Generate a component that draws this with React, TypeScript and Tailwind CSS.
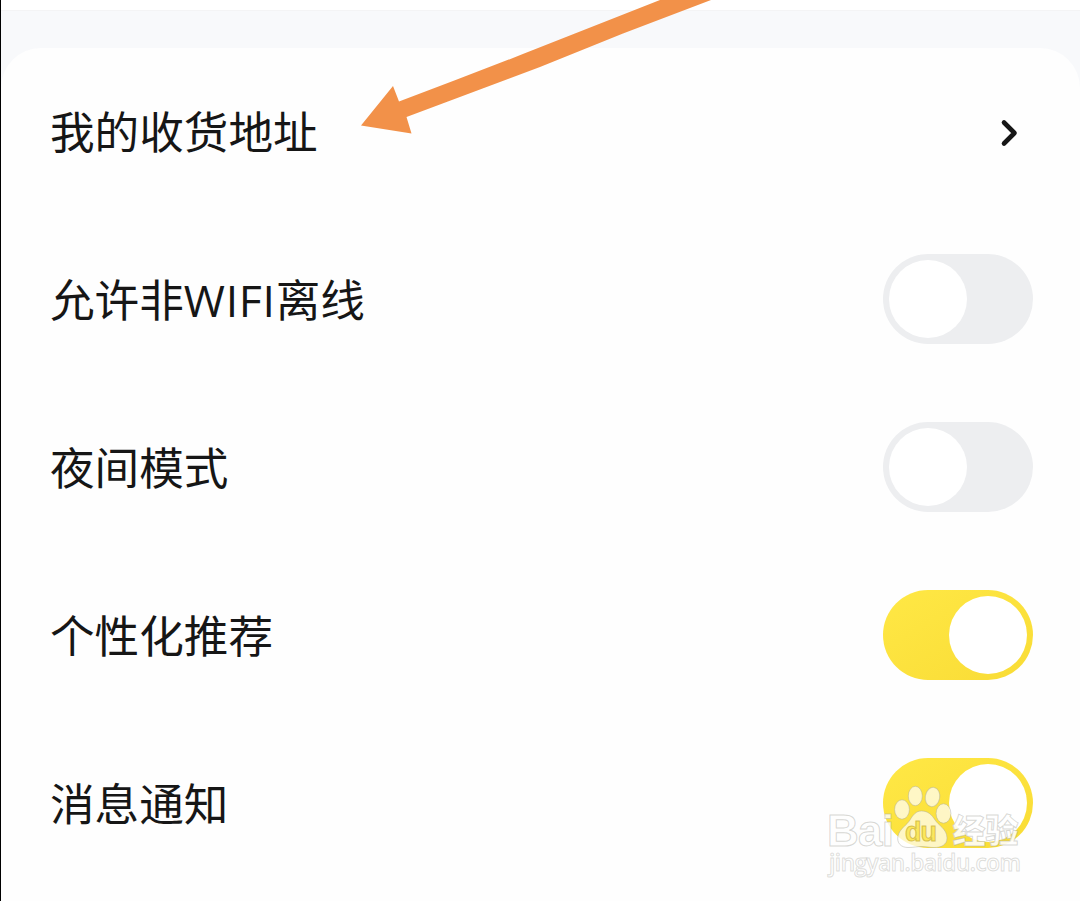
import clsx from "clsx";
import type { ReactNode } from "react";

type Setting = {
  id: string;
  label: ReactNode;
  on?: boolean;
};

const settings: Setting[] = [
  {
    id: "offline",
    label: (
      <>
        允许非
        <span className="font-['Open_Sans'] leading-[0] tracking-[0.7px]">WIFI</span>
        离线
      </>
    ),
    on: false,
  },
  { id: "night", label: "夜间模式", on: false },
  { id: "recommend", label: "个性化推荐", on: true },
  { id: "notice", label: "消息通知", on: true },
];

function Toggle({ on }: { on?: boolean }) {
  return (
    <button
      role="switch"
      aria-checked={on}
      className={clsx(
        "flex h-[90px] w-[150px] shrink-0 items-center rounded-full px-1.5",
        on
          ? "justify-end bg-linear-to-br from-[#ffe845] to-[#f9dc35]"
          : "justify-start bg-[#edeef0]",
      )}
    >
      <span className="size-[78px] rounded-full bg-white" />
    </button>
  );
}

function Label({ children }: { children: ReactNode }) {
  return (
    <span className="mb-[2px] text-[44.6px] leading-none whitespace-nowrap text-[#161616]">
      {children}
    </span>
  );
}

function Arrow() {
  return (
    <svg
      className="pointer-events-none absolute top-0 left-[349px]"
      width="370"
      height="140"
      viewBox="350 0 370 140"
    >
      <path
        d="M361 125.5 L393 86 L399 101.5 Q470 75 540 47.3 L660 0 H711 L623 33.5 L540 67 L406.5 117 L411.5 133.5 Z"
        fill="#f29149"
      />
    </svg>
  );
}

function Watermark() {
  return (
    <svg
      className="pointer-events-none absolute top-[780px] left-[819px]"
      width="210"
      height="105"
      viewBox="820 780 210 105"
      fill="#ffffff"
      fillOpacity="0.8"
      stroke="#a8a8a0"
      strokeOpacity="0.45"
      strokeWidth="1"
    >
      <text x="827" y="846" textLength="67" className="font-['Liberation_Sans'] text-[44px] font-bold">
        Bai
      </text>
      <g fillOpacity="0.7">
        <ellipse cx="902" cy="809.5" rx="7.4" ry="9.7" />
        <ellipse cx="915.3" cy="796" rx="7" ry="9.7" />
        <ellipse cx="932.5" cy="797" rx="7.2" ry="9.7" transform="rotate(10 932.5 797)" />
        <ellipse cx="943.5" cy="813.5" rx="7.4" ry="9.7" />
        <path d="M921.5 811 C928 811 932 815 935 820 C938 825 947 829 947 838 C947 845 941 847.5 934 847.5 C929 847.5 927 846.5 922 846.5 C917 846.5 914 847.5 908 847.5 C901 847.5 896.5 843 898 836 C899.5 829 907 825 910 820 C913 815 916 811 921.5 811 Z" />
      </g>
      <text
        x="905"
        y="841"
        textLength="32"
        fill="#fbe75c"
        fillOpacity="1"
        stroke="#cdb53d"
        strokeOpacity="0.8"
        className="font-['Liberation_Sans'] text-[27px] font-bold"
      >
        du
      </text>
      <text
        x="952.5"
        y="843"
        textLength="66"
        fillOpacity="0.9"
        className="font-['Noto_Sans_CJK_SC'] text-[33px] font-black"
      >
        经验
      </text>
      <text
        x="829"
        y="871"
        textLength="192"
        strokeOpacity="0.38"
        className="font-['Open_Sans'] text-[22.5px] font-semibold"
      >
        jingyan.baidu.com
      </text>
    </svg>
  );
}

export default function App() {
  return (
    <div className="relative h-[901px] w-[1080px] overflow-hidden border-l border-black bg-[#f8f9fb] font-['Noto_Sans_CJK_SC',sans-serif]">
      <div className="h-[11px] border-b border-[#f4f4f5] bg-white" />
      <main className="mt-[37px] h-[853px] rounded-t-[40px] bg-[#fefefe]">
        <div className="flex h-[167px] items-center justify-between pr-[58px] pl-[49px]">
          <Label>我的收货地址</Label>
          <svg
            className="mt-[3px]"
            width="22"
            height="30"
            viewBox="0 0 22 30"
            fill="none"
            stroke="#161616"
            strokeWidth="4.6"
            strokeLinecap="round"
            strokeLinejoin="round"
          >
            <path d="M4 4.5 L14.5 15 L4 25.5" />
          </svg>
        </div>
        {settings.map((item) => (
          <div
            key={item.id}
            className="flex h-[168px] items-center justify-between pr-[47px] pl-[49px]"
          >
            <Label>{item.label}</Label>
            <Toggle on={item.on} />
          </div>
        ))}
      </main>
      <Arrow />
      <Watermark />
    </div>
  );
}
